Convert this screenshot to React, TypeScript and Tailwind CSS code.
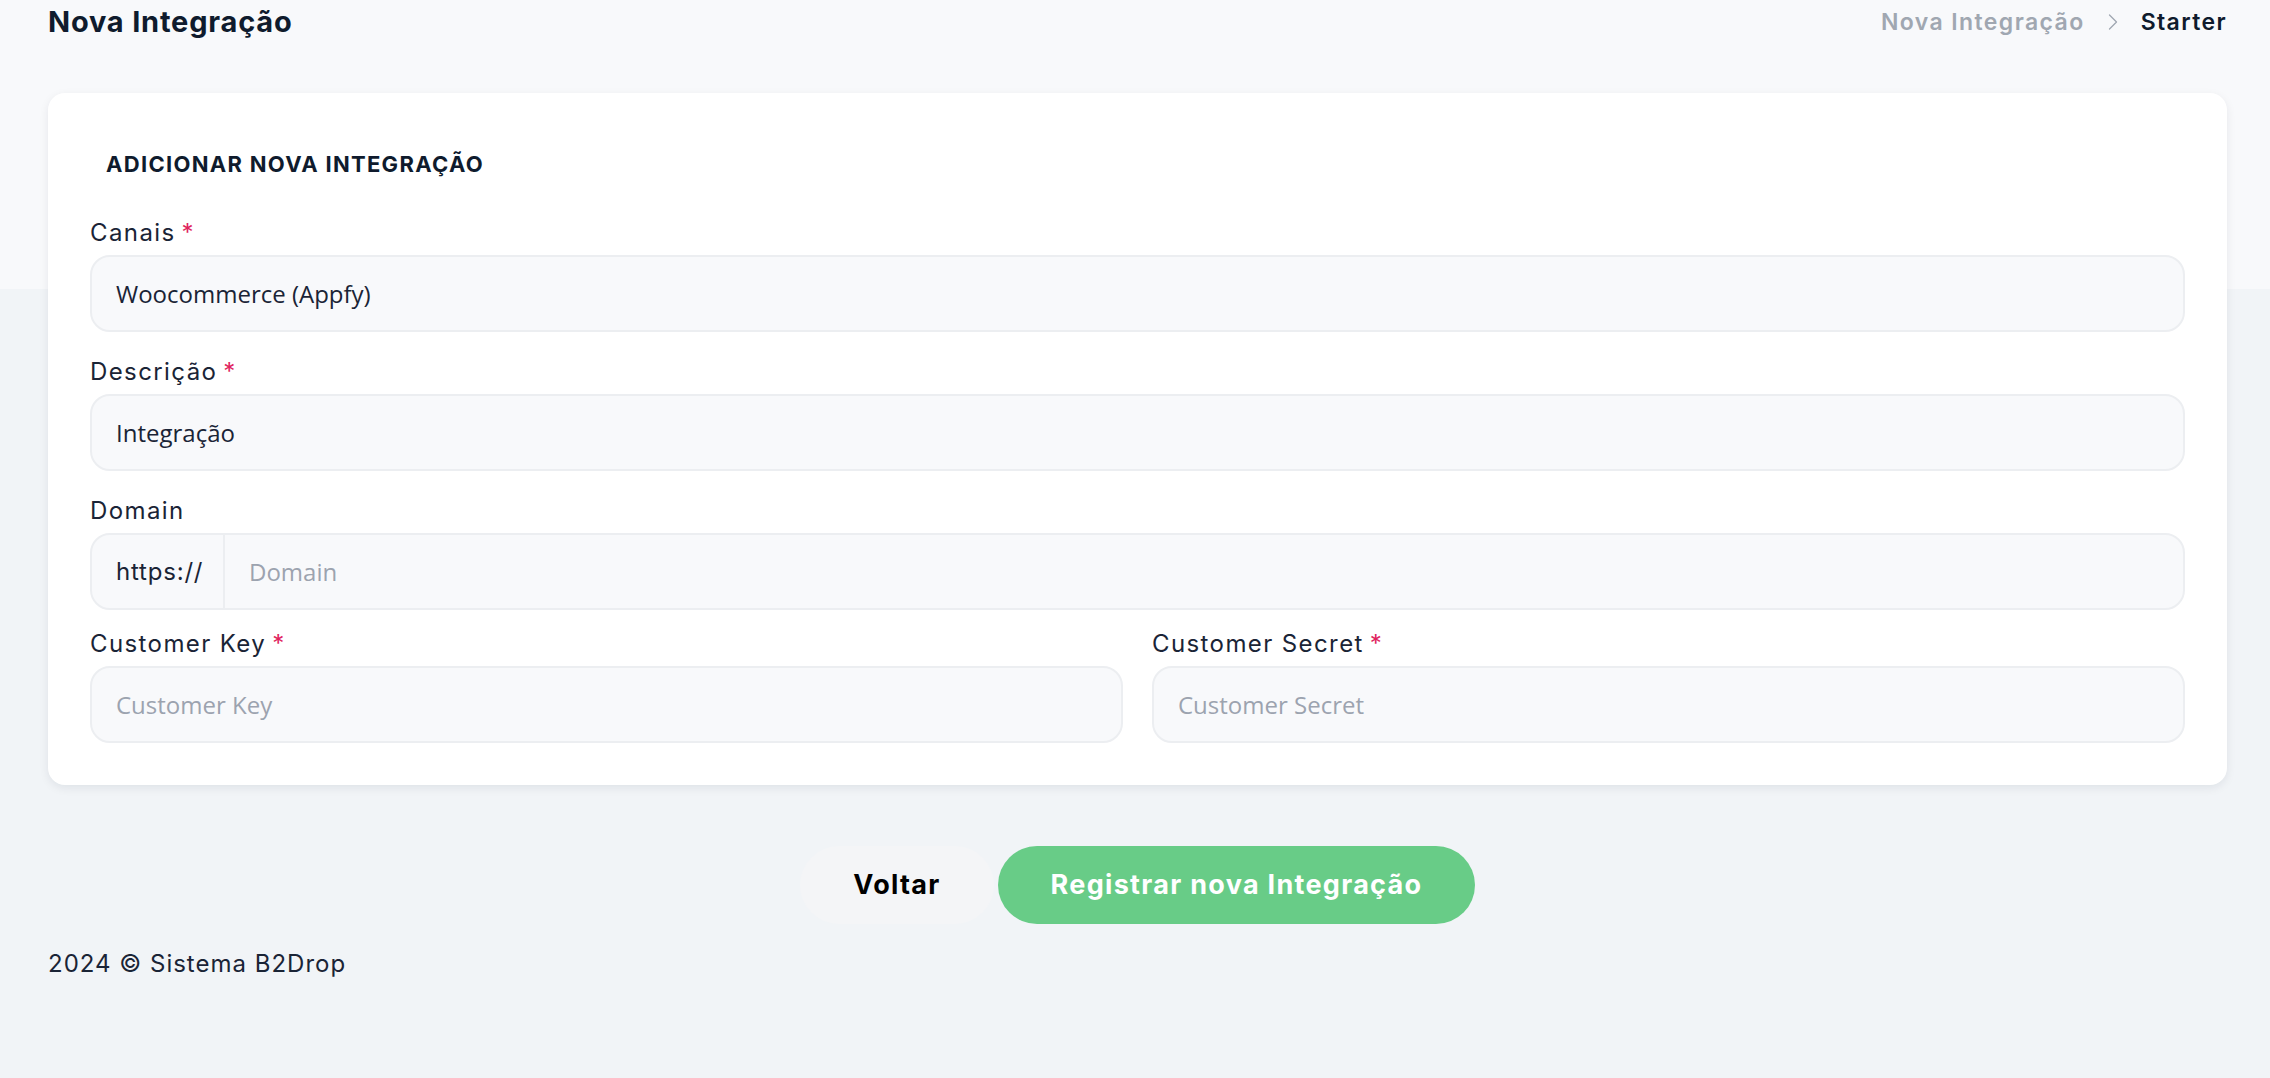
import { ChevronRight } from 'lucide-react';

const heading = { fontFamily: 'Inter, "Noto Sans", sans-serif' };
const field = { fontFamily: '"Open Sans", "Noto Sans", sans-serif' };

function Label({ text, required }: { text: string; required?: boolean }) {
  return (
    <label className="block text-[24px] leading-[34px] tracking-[1.4px] text-[#1a2436] mb-[5px]" style={heading}>
      {text}
      {required && <span className="text-[#e0245e] ml-[6px]">*</span>}
    </label>
  );
}

function Input({ value, placeholder }: { value?: string; placeholder?: string }) {
  return (
    <div
      className="h-[77px] rounded-[20px] border-2 border-[#eceef1] bg-[#f8f9fb] flex items-center px-[24px] text-[24px]"
      style={field}
    >
      {value ? (
        <span className="text-[#1a2436]">{value}</span>
      ) : (
        <span className="text-[#9ca3af]">{placeholder}</span>
      )}
    </div>
  );
}

export default function App() {
  return (
    <div className="min-h-[1078px] w-full bg-[#f1f4f7] relative">
      {/* faixa clara do topo */}
      <div className="absolute top-0 left-0 right-0 h-[289px] bg-[#f8f9fb]" />

      <div className="relative pl-[48px] pr-[43px]">
        <div className="flex items-center justify-between h-[44px]">
          <h1 className="text-[29px] font-bold text-[#0f1b2d] tracking-[0.8px]" style={heading}>
            Nova Integração
          </h1>
          <div className="flex items-center text-[23px] font-semibold tracking-[1.4px]" style={heading}>
            <span className="text-[#a0a7b1]">Nova Integração</span>
            <ChevronRight className="mx-[14px] text-[#a0a7b1]" size={28} strokeWidth={1.1} />
            <span className="text-[#0f1b2d]">Starter</span>
          </div>
        </div>

        <div className="mt-[49px] bg-white rounded-[17px] shadow-[0_3px_10px_rgba(15,27,45,0.08)] p-[42px]">
          <h2 className="text-[22px] leading-[32px] font-bold tracking-[1.3px] text-[#0f1b2d] uppercase pl-[16px] mt-[13px] mb-[36px]" style={heading}>
            Adicionar nova integração
          </h2>

          <div className="flex flex-col gap-[23px]">
            <div>
              <Label text="Canais" required />
              <Input value="Woocommerce (Appfy)" />
            </div>
            <div>
              <Label text="Descrição" required />
              <Input value="Integração" />
            </div>
            <div>
              <Label text="Domain" />
              <div className="h-[77px] rounded-[20px] border-2 border-[#eceef1] bg-[#f8f9fb] flex items-stretch text-[24px] overflow-hidden">
                <div className="w-[133px] flex items-center px-[24px] border-r-2 border-[#eceef1] text-[#1a2436] tracking-[0.8px]" style={heading}>
                  https://
                </div>
                <div className="flex-1 flex items-center px-[24px] text-[#9ca3af]" style={field}>
                  Domain
                </div>
              </div>
            </div>
            <div className="grid grid-cols-2 gap-[29px] -mt-[6px]">
              <div>
                <Label text="Customer Key" required />
                <Input placeholder="Customer Key" />
              </div>
              <div>
                <Label text="Customer Secret" required />
                <Input placeholder="Customer Secret" />
              </div>
            </div>
          </div>
        </div>

        <div className="mt-[61px] flex justify-center gap-[4px] tracking-[1.3px]" style={heading}>
          <button className="w-[194px] h-[78px] rounded-full bg-[#f4f5f7] text-black text-[27px] font-bold">
            Voltar
          </button>
          <button className="w-[477px] h-[78px] rounded-full bg-[#68cc87] text-white text-[27px] font-bold">
            Registrar nova Integração
          </button>
        </div>

        <footer className="mt-[23px] text-[24px] leading-[34px] tracking-[1px] text-[#1a2436]" style={heading}>
          2024 © Sistema B2Drop
        </footer>
      </div>
    </div>
  );
}
